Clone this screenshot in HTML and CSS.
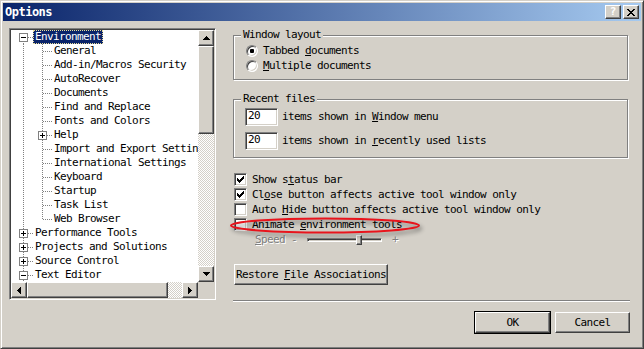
FILE: index.html
```html
<!DOCTYPE html>
<html lang="en">

<head>
    <meta charset="UTF-8">
    <title>Options</title>
    <link rel="stylesheet" href="styles.css">
</head>

<body>
    <div class="window">
        <div class="titlebar">
            <span class="title">Options</span>
            <button class="raised cap-btn">?</button>
            <button class="raised cap-btn">
                <svg width="8" height="7" viewBox="0 0 8 7"><path d="M0 0h2v1h1v1h2V1h1V0h2v1H7v1H6v1H5v1h1v1h1v1h1v1H6V6H5V5H3v1H2v1H0V6h1V5h1V4h1V3H2V2H1V1H0z"/></svg>
            </button>
        </div>

        <div class="client">
            <div class="main">
                <div class="tree">
                    <div class="tree-view">
                        <div class="node sel"><span class="col f"><i class="box minus"></i></span><span class="label">Environment</span></div>
                        <div class="node"><span class="col v"></span><span class="col t"></span><span class="label">General</span></div>
                        <div class="node"><span class="col v"></span><span class="col t"></span><span class="label">Add-in/Macros Security</span></div>
                        <div class="node"><span class="col v"></span><span class="col t"></span><span class="label">AutoRecover</span></div>
                        <div class="node"><span class="col v"></span><span class="col t"></span><span class="label">Documents</span></div>
                        <div class="node"><span class="col v"></span><span class="col t"></span><span class="label">Find and Replace</span></div>
                        <div class="node"><span class="col v"></span><span class="col t"></span><span class="label">Fonts and Colors</span></div>
                        <div class="node"><span class="col v"></span><span class="col t"><i class="box plus"></i></span><span class="label">Help</span></div>
                        <div class="node"><span class="col v"></span><span class="col t"></span><span class="label">Import and Export Settings</span></div>
                        <div class="node"><span class="col v"></span><span class="col t"></span><span class="label">International Settings</span></div>
                        <div class="node"><span class="col v"></span><span class="col t"></span><span class="label">Keyboard</span></div>
                        <div class="node"><span class="col v"></span><span class="col t"></span><span class="label">Startup</span></div>
                        <div class="node"><span class="col v"></span><span class="col t"></span><span class="label">Task List</span></div>
                        <div class="node"><span class="col v"></span><span class="col l"></span><span class="label">Web Browser</span></div>
                        <div class="node"><span class="col t"><i class="box plus"></i></span><span class="label">Performance Tools</span></div>
                        <div class="node"><span class="col t"><i class="box plus"></i></span><span class="label">Projects and Solutions</span></div>
                        <div class="node"><span class="col t"><i class="box plus"></i></span><span class="label">Source Control</span></div>
                        <div class="node"><span class="col t"><i class="box minus"></i></span><span class="label">Text Editor</span></div>
                    </div>

                    <div class="vscroll">
                        <button class="raised sb-btn"><svg width="7" height="4"><path d="M3 0h1v1h1v1h1v1h1v1H0V3h1V2h1V1h1z"/></svg></button>
                        <div class="raised vthumb"></div>
                        <div class="track"></div>
                        <button class="raised sb-btn"><svg width="7" height="4"><path d="M0 0h7v1H6v1H5v1H4v1H3V3H2V2H1V1H0z"/></svg></button>
                    </div>

                    <div class="hscroll">
                        <button class="raised sb-btn"><svg width="4" height="7"><path d="M4 0v7H3V6H2V5H1V4H0V3h1V2h1V1h1V0z"/></svg></button>
                        <div class="raised hthumb"></div>
                        <div class="track"></div>
                        <button class="raised sb-btn"><svg width="4" height="7"><path d="M0 0h1v1h1v1h1v1h1v1H3v1H2v1H1v1H0z"/></svg></button>
                    </div>

                    <div class="corner"></div>
                </div>

                <div class="panel">
                    <div class="group group-layout">
                        <div class="group-title">Window layout</div>
                        <div class="options">
                            <div class="radio-row"><span class="radio checked"></span><span>Tabbed <u>d</u>ocuments</span></div>
                            <div class="radio-row"><span class="radio"></span><span><u>M</u>ultiple documents</span></div>
                        </div>
                    </div>

                    <div class="group group-recent">
                        <div class="group-title">Recent files</div>
                        <div class="field-row"><span class="textbox">20</span><span>items shown in <u>W</u>indow menu</span></div>
                        <div class="field-row"><span class="textbox">20</span><span>items shown in <u>r</u>ecently used lists</span></div>
                    </div>

                    <div class="checks">
                        <div class="check-row"><span class="checkbox checked"><svg width="7" height="7"><path d="M6 0h1v3H6v1H5v1H4v1H3v1H2V6H1V5H0V2h1v1h1v1h1V3h1V2h1V1h1z"/></svg></span><span>Show s<u>t</u>atus bar</span></div>
                        <div class="check-row"><span class="checkbox checked"><svg width="7" height="7"><path d="M6 0h1v3H6v1H5v1H4v1H3v1H2V6H1V5H0V2h1v1h1v1h1V3h1V2h1V1h1z"/></svg></span><span>Cl<u>o</u>se button affects active tool window only</span></div>
                        <div class="check-row"><span class="checkbox"></span><span>Auto <u>H</u>ide button affects active tool window only</span></div>
                        <div class="check-row"><span class="checkbox"></span><span>Animate <u>e</u>nvironment tools</span></div>
                        <div class="speed-row disabled">
                            <span><u>S</u>peed&nbsp;-</span>
                            <div class="slider">
                                <div class="groove"></div>
                                <div class="raised slider-thumb"></div>
                            </div>
                            <span class="plus-sign">+</span>
                        </div>
                    </div>

                    <button class="raised btn restore">Restore <u>F</u>ile Associations</button>

                    <div class="separator"></div>
                </div>
            </div>

            <div class="actions">
                <button class="raised btn default">OK</button>
                <button class="raised btn">Cancel</button>
            </div>
        </div>

        <svg class="annot" width="198" height="26" viewBox="0 0 198 26">
            <ellipse cx="98" cy="12.5" rx="94" ry="7" fill="none" stroke="#e8141c" stroke-width="2"/>
        </svg>
    </div>
</body>

</html>
```

FILE: styles.css
```css
* {
    box-sizing: border-box;
}

body {
    margin: 0;
    background: #d4d0c8;
    font: 11px/12px "DejaVu Sans Mono", "Liberation Mono", monospace;
    letter-spacing: -0.62px;
    color: #000;
}

button {
    font: inherit;
    letter-spacing: inherit;
    color: inherit;
    padding: 0;
    margin: 0;
    background: #d4d0c8;
}

u {
    text-underline-offset: 1px;
}

/* 3d frames */
.raised {
    border: 1px solid;
    border-color: #fff #404040 #404040 #fff;
    box-shadow: inset -1px -1px #808080;
    background: #d4d0c8;
}

.window {
    position: relative;
    width: 644px;
    height: 349px;
    background: #d4d0c8;
    border: 1px solid;
    border-color: #d4d0c8 #404040 #404040 #d4d0c8;
    box-shadow: inset 1px 1px #fff, inset -1px -1px #808080;
    padding: 2px;
}

.titlebar {
    height: 18px;
    display: flex;
    align-items: center;
    gap: 2px;
    padding: 0 2px;
    background: linear-gradient(to right, #0a246a, #a6caf0);
    color: #fff;
}

.title {
    flex: 1;
    font-weight: bold;
    font-size: 12px;
    letter-spacing: -0.5px;
}

.cap-btn {
    width: 16px;
    height: 14px;
    display: flex;
    align-items: center;
    justify-content: center;
    font-weight: bold;
    letter-spacing: 0;
    line-height: 12px;
}

.cap-btn svg {
    display: block;
}

.client {
    padding: 7px 11px 0 6px;
}

.main {
    display: flex;
    height: 274px;
}

/* tree view */
.tree {
    width: 207px;
    height: 272px;
    display: grid;
    grid-template-columns: 187px 16px;
    grid-template-rows: 252px 16px;
    border: 1px solid;
    border-color: #808080 #fff #fff #808080;
    box-shadow: inset 1px 1px #404040, inset -1px -1px #d4d0c8;
    padding: 1px;
}

.tree-view {
    background: #fff;
    overflow: hidden;
}

.node {
    display: flex;
    height: 14px;
    padding-left: 3px;
    white-space: nowrap;
}

.col {
    flex: none;
    width: 19px;
    height: 14px;
    --dotv: repeating-linear-gradient(to bottom, #808080 0 1px, transparent 1px 2px);
    --doth: repeating-linear-gradient(to right, #808080 0 1px, transparent 1px 2px);
}

.col.v {
    background: var(--dotv) 9px 0 / 1px 14px no-repeat;
}

.col.t {
    background: var(--dotv) 9px 0 / 1px 14px no-repeat, var(--doth) 10px 7px / 9px 1px no-repeat;
}

.col.l {
    background: var(--dotv) 9px 0 / 1px 8px no-repeat, var(--doth) 10px 7px / 9px 1px no-repeat;
}

.col.f {
    background: var(--dotv) 9px 7px / 1px 7px no-repeat, var(--doth) 10px 7px / 9px 1px no-repeat;
}

.box {
    display: block;
    width: 9px;
    height: 9px;
    margin: 3px 0 0 5px;
    border: 1px solid #808080;
    background: #fff;
}

.box.minus {
    background: linear-gradient(#000, #000) center / 5px 1px no-repeat, #fff;
}

.box.plus {
    background: linear-gradient(#000, #000) center / 5px 1px no-repeat, linear-gradient(#000, #000) center / 1px 5px no-repeat, #fff;
}

.label {
    border: 1px solid transparent;
    padding: 0 1px;
    line-height: 12px;
}

.sel .label {
    background: #0a246a;
    color: #fff;
    border: 1px dotted #e8dc9a;
}

/* scrollbars */
.vscroll {
    display: flex;
    flex-direction: column;
}

.hscroll {
    display: flex;
}

.sb-btn {
    width: 16px;
    height: 16px;
    flex: none;
    display: flex;
    align-items: center;
    justify-content: center;
}

.sb-btn svg {
    display: block;
}

.vthumb {
    height: 88px;
    flex: none;
}

.hthumb {
    width: 141px;
    flex: none;
}

.track {
    flex: 1;
    background: repeating-conic-gradient(#fff 0 25%, #d4d0c8 0 50%) 0 0 / 2px 2px;
}

.corner {
    background: #d4d0c8;
}

/* right panel */
.panel {
    margin-left: 17px;
    width: 397px;
    display: flex;
    flex-direction: column;
}

.group {
    margin-right: 2px;
    border: 1px solid #808080;
    box-shadow: inset 1px 1px #fff, 1px 1px #fff;
}

.group-title {
    width: max-content;
    margin: -8px 0 0 7px;
    padding: 0 2px;
    line-height: 14px;
    background: #d4d0c8;
}

.group-layout {
    margin-top: 7px;
    padding-bottom: 6px;
}

.options {
    padding-top: 1px;
}

.radio-row {
    display: flex;
    align-items: center;
    height: 15px;
    padding-left: 12px;
}

.radio {
    width: 12px;
    height: 12px;
    margin-right: 5px;
    border-radius: 50%;
    border: 1px solid;
    border-color: #808080 #fff #fff #808080;
    box-shadow: inset 1px 1px #404040, inset -1px -1px #d4d0c8;
    background: #fff;
}

.radio.checked {
    background: radial-gradient(circle, #000 0 2px, #fff 2.5px);
}

.group-recent {
    margin-top: 19px;
    padding-bottom: 7px;
}

.field-row {
    display: flex;
    align-items: center;
    gap: 4px;
    padding-left: 11px;
    margin-top: 6px;
    white-space: nowrap;
}

.group-title + .field-row {
    margin-top: 2px;
}

.textbox {
    width: 33px;
    height: 18px;
    padding-left: 2px;
    line-height: 14px;
    background: #fff;
    border: 1px solid;
    border-color: #808080 #fff #fff #808080;
    box-shadow: inset 1px 1px #404040, inset -1px -1px #d4d0c8;
}

.checks {
    margin-top: 14px;
}

.check-row {
    display: flex;
    align-items: center;
    gap: 5px;
    height: 15px;
    padding-left: 1px;
    white-space: nowrap;
}

.checkbox {
    width: 13px;
    height: 13px;
    flex: none;
    display: flex;
    align-items: center;
    justify-content: center;
    background: #fff;
    border: 1px solid;
    border-color: #808080 #fff #fff #808080;
    box-shadow: inset 1px 1px #404040, inset -1px -1px #d4d0c8;
}

.checkbox svg {
    display: block;
}

.speed-row {
    display: flex;
    align-items: center;
    height: 15px;
    padding-left: 22px;
}

.disabled {
    color: #808080;
    text-shadow: 1px 1px #fff;
}

.slider {
    position: relative;
    flex: none;
    width: 75px;
    height: 15px;
    margin-left: 10px;
}

.groove {
    position: relative;
    top: 6px;
    height: 4px;
    border: 1px solid;
    border-color: #808080 #fff #fff #808080;
    box-shadow: inset 1px 1px #404040;
}

.slider-thumb {
    position: absolute;
    left: 49px;
    top: 3px;
    width: 6px;
    height: 10px;
}

.plus-sign {
    margin-left: 10px;
}

.btn {
    height: 21px;
    line-height: 18px;
}

.restore {
    width: 154px;
    margin: 17px 0 0 1px;
    text-align: center;
}

.separator {
    margin-top: 15px;
    height: 2px;
    border-top: 1px solid #808080;
    border-bottom: 1px solid #fff;
}

.actions {
    display: flex;
    justify-content: flex-end;
    gap: 5px;
    margin-top: 10px;
}

.actions .btn {
    width: 75px;
}

.btn.default {
    box-shadow: inset -1px -1px #808080, 0 0 0 1px #000;
}

.annot {
    position: absolute;
    left: 226px;
    top: 212px;
    filter: drop-shadow(2px 3px 2px rgba(0, 0, 0, 0.45));
}
```
